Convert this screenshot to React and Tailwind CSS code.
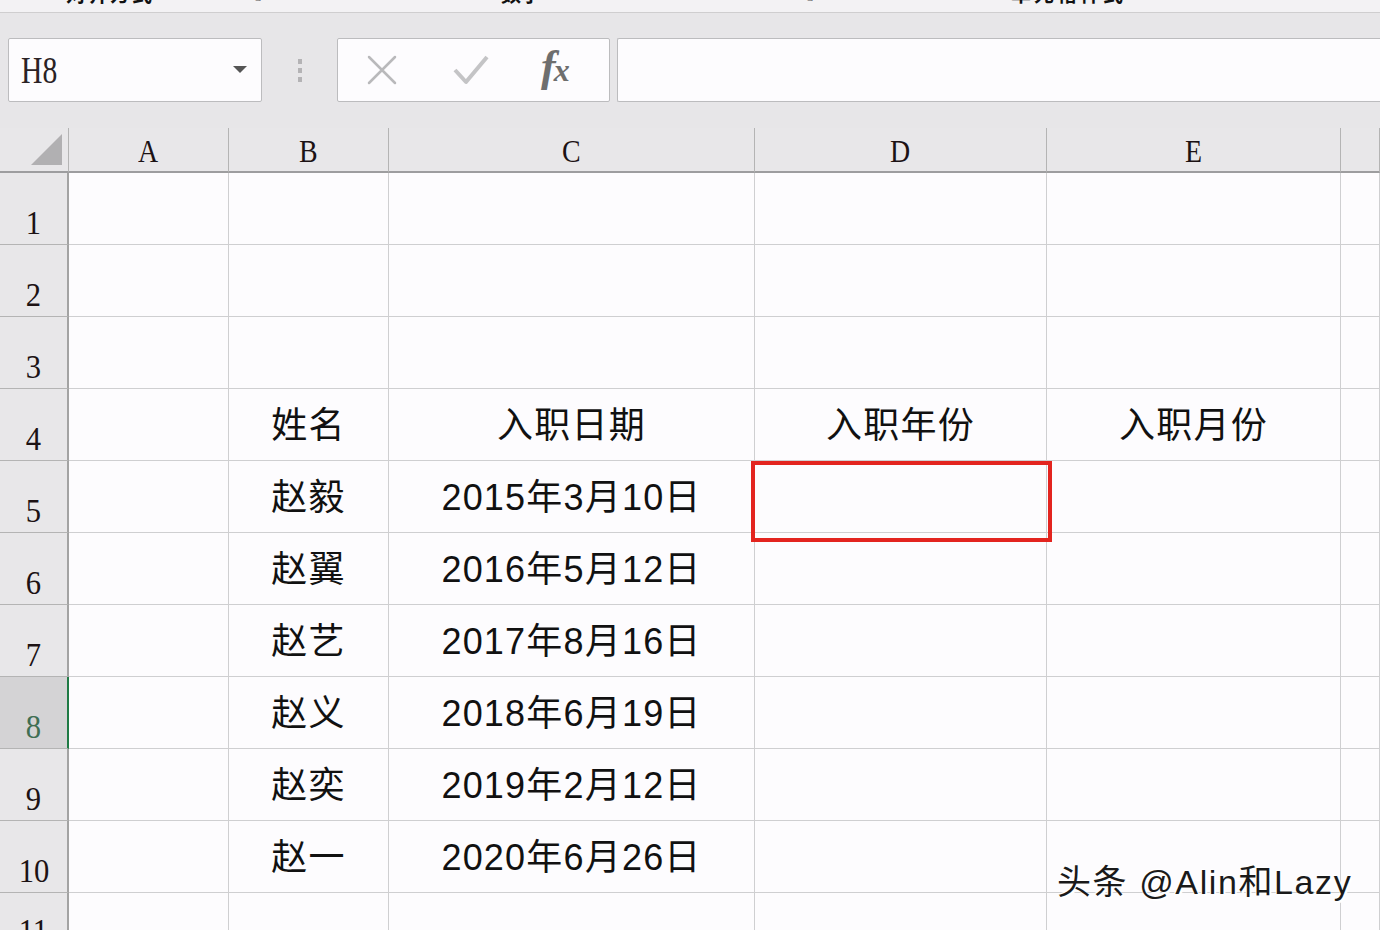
import React from "react";

const cols = [
  { k: "A", w: 160 },
  { k: "B", w: 160 },
  { k: "C", w: 366 },
  { k: "D", w: 292 },
  { k: "E", w: 294 },
  { k: "", w: 39 },
];

const data = {
  4: ["", "姓名", "入职日期", "入职年份", "入职月份", ""],
  5: ["", "赵毅", "2015年3月10日", "", "", ""],
  6: ["", "赵翼", "2016年5月12日", "", "", ""],
  7: ["", "赵艺", "2017年8月16日", "", "", ""],
  8: ["", "赵义", "2018年6月19日", "", "", ""],
  9: ["", "赵奕", "2019年2月12日", "", "", ""],
  10: ["", "赵一", "2020年6月26日", "", "", ""],
};

const serif = { fontFamily: '"Liberation Serif", "DejaVu Serif", serif' };
const cjk = { fontFamily: '"Liberation Sans", "Noto Sans CJK SC", sans-serif' };

function Row({ n, h = 72 }) {
  const sel = n === 8;
  const vals = data[n] || [];
  return (
    <div className="flex" style={{ height: h }}>
      <div
        className={
          "w-[69px] shrink-0 border-b border-r-2 flex items-end justify-center pb-[4px] " +
          (sel
            ? "bg-[#d4d3d5] border-r-[#1f7a45] border-b-[#b4b4b4] text-[#3f6e53]"
            : "bg-[#e8e7e9] border-r-[#a3a3a3] border-b-[#b4b4b4] text-[#1c1214]")
        }
      >
        <span className="text-[34px] leading-none scale-x-[0.9]" style={serif}>
          {n}
        </span>
      </div>
      {cols.map((c, i) => (
        <div
          key={i}
          className="shrink-0 border-b border-r border-[#cfcfd1] flex items-center justify-center bg-[#fdfcfe] text-[#111] text-[36px] leading-none tracking-[1.2px]"
          style={{ width: c.w, ...cjk }}
        >
          {vals[i] ? <span className="mt-[2px]">{vals[i]}</span> : null}
        </div>
      ))}
      <div className="flex-1 border-b border-[#cfcfd1] bg-[#fdfcfe]" />
    </div>
  );
}

export default function App() {
  return (
    <div className="w-[1380px] h-[930px] overflow-hidden bg-[#e7e6e8] relative" style={cjk}>
      {/* top ribbon strip (clipped) */}
      <div className="h-[13px] bg-[#f3f2f4] border-b border-[#cfcecf] overflow-hidden relative">
        <div className="flex items-start text-[20px] font-bold text-[#111] leading-none -mt-[15px]">
          <span className="ml-[66px] tracking-[2px]">对齐方式</span>
          <span className="ml-[95px] text-[14px] mt-[4px] text-[#555]">↘</span>
          <span className="ml-[238px]">数字</span>
          <span className="ml-[260px] text-[14px] mt-[4px] text-[#555]">↘</span>
          <span className="ml-[196px] tracking-[3px]">单元格样式</span>
        </div>
      </div>

      {/* formula bar */}
      <div className="h-[115px] flex items-start pt-[25px] bg-[#e7e6e8]">
        <div className="ml-[8px] w-[254px] h-[64px] bg-[#fdfcfe] border border-[#bcbcbe] rounded-[2px] flex items-center justify-between pl-[12px] pr-[14px]">
          <span className="text-[38px] leading-none text-[#2a2225] scale-x-[0.78] origin-left" style={serif}>
            H8
          </span>
          <svg width="14" height="8" viewBox="0 0 14 8">
            <path d="M0 0 L14 0 L7 7 Z" fill="#555" />
          </svg>
        </div>
        <div className="w-[75px] h-[64px] flex flex-col items-center justify-center gap-[4px]">
          <span className="w-[4px] h-[5px] bg-[#b4b3b5]" />
          <span className="w-[4px] h-[5px] bg-[#b4b3b5]" />
          <span className="w-[4px] h-[5px] bg-[#b4b3b5]" />
        </div>
        <div className="w-[273px] h-[64px] bg-[#fdfcfe] border border-[#bcbcbe] rounded-[2px] flex items-center">
          <svg className="ml-[29px]" width="30" height="30" viewBox="0 0 30 30">
            <path d="M2 2 L28 28 M28 2 L2 28" stroke="#b9b9bb" strokeWidth="2.5" strokeLinecap="round" />
          </svg>
          <svg className="ml-[56px]" width="36" height="32" viewBox="0 0 36 32">
            <path d="M2 16 L13 28 L34 3" stroke="#c4c4c6" strokeWidth="4" fill="none" strokeLinejoin="round" />
          </svg>
          <span
            className="ml-[52px] text-[44px] italic font-bold text-[#6e6e6e] leading-none -mt-[6px] tracking-[-2px]"
            style={serif}
          >
            f<span className="text-[32px]">x</span>
          </span>
        </div>
        <div className="ml-[7px] flex-1 h-[64px] bg-[#fdfcfe] border border-[#bcbcbe] border-r-0 rounded-l-[2px]" />
      </div>

      {/* sheet */}
      <div className="relative">
        {/* column headers */}
        <div className="flex h-[45px] bg-[#e8e7e9]">
          <div className="w-[69px] shrink-0 border-b-2 border-r border-[#9d9d9f] border-r-[#b4b4b4] relative">
            <svg className="absolute left-[31px] top-[6px]" width="31" height="31" viewBox="0 0 31 31">
              <path d="M31 0 L31 31 L0 31 Z" fill="#b1b0b2" />
            </svg>
          </div>
          {cols.map((c, i) => (
            <div
              key={i}
              className="shrink-0 border-b-2 border-b-[#9d9d9f] border-r border-r-[#b4b4b4] flex items-center justify-center text-[31px] text-[#1c1214] leading-none"
              style={{ width: c.w, ...serif }}
            >
              <span className="scale-x-[0.9] mt-[4px]">{c.k}</span>
            </div>
          ))}
          <div className="flex-1 border-b-2 border-[#9d9d9f]" />
        </div>

        {[1, 2, 3, 4, 5, 6, 7, 8, 9, 10].map((n) => (
          <Row key={n} n={n} />
        ))}
        <Row n={11} h={60} />

        {/* selection box */}
        <div className="absolute left-[751px] top-[333px] w-[301px] h-[81px] border-[4px] border-[#e3241f]" />

        {/* watermark */}
        <div
          className="absolute left-[1057px] top-[737px] text-[34px] leading-none text-[#1a1a1a] whitespace-nowrap tracking-[1.6px]"
          style={{ ...cjk, textShadow: "2px 2px 0 #fff, -1px -1px 0 #fff" }}
        >
          头条 @Alin和Lazy
        </div>
      </div>
    </div>
  );
}
